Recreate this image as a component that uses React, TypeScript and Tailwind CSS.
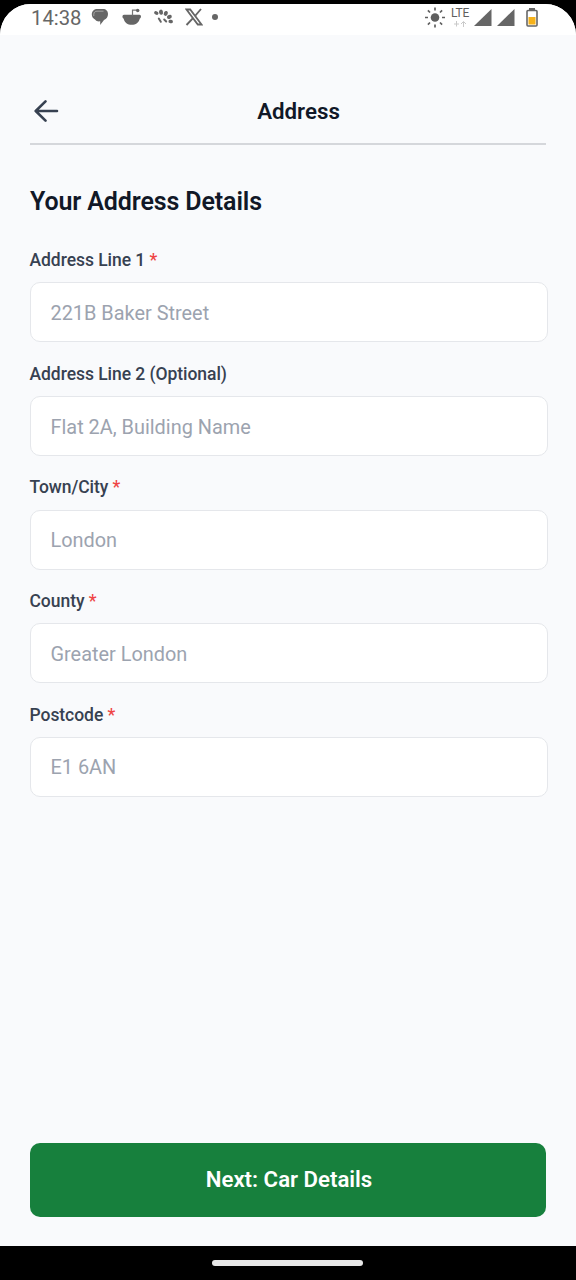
import React from "react";

type Field = { label: string; placeholder: string; required: boolean };

const fields: Field[] = [
  { label: "Address Line 1", placeholder: "221B Baker Street", required: true },
  { label: "Address Line 2 (Optional)", placeholder: "Flat 2A, Building Name", required: false },
  { label: "Town/City", placeholder: "London", required: true },
  { label: "County", placeholder: "Greater London", required: true },
  { label: "Postcode", placeholder: "E1 6AN", required: true },
];

function ChatIcon() {
  return (
    <svg className="h-[18px] w-[18px]" viewBox="0 0 18 18" fill="#666">
      <path d="M6.500 1H12c3 0 5 2 5 5 0 2.700-1.500 5-4 6L9.200 17v-3.700C7 13.700 5 13 4 11.500 2 10.500.8 8.700.8 6.500.8 3 3.200 1 6.500 1Z" />
      <path d="M2.800 8V6.200c0-2 1.500-3 3.200-3h6.500" fill="none" stroke="#b4b4b4" strokeWidth=".8" />
    </svg>
  );
}

function BowlIcon() {
  return (
    <svg className="h-[18px] w-5" viewBox="0 0 20 18" fill="#666">
      <path d="M2 6.800h15.500c1.700.1 2.200 2.800.2 3.900-.6 3.700-4 6.100-8 6.100s-7.400-2.400-8-6.100C-.3 9.600.3 6.900 2 6.800Z" />
      <path d="M10.500 7.500V2.200h4.500" fill="none" stroke="#777" strokeWidth="1.200" />
      <circle cx="15.700" cy="2.500" r="1.700" />
    </svg>
  );
}

function PawIcon() {
  return (
    <svg className="h-[18px] w-5" viewBox="0 0 20 18" fill="#666">
      <ellipse cx="2.300" cy="5" rx="2.200" ry="1.700" transform="rotate(25 2.300 5)" />
      <ellipse cx="7" cy="4.200" rx="2" ry="2.600" transform="rotate(-12 7 4.200)" />
      <ellipse cx="11.800" cy="5.400" rx="2" ry="2.500" transform="rotate(20 11.800 5.400)" />
      <ellipse cx="15.400" cy="8.900" rx="2.500" ry="1.900" transform="rotate(-20 15.400 8.900)" />
      <ellipse cx="16.700" cy="13.500" rx="2.300" ry="1.700" transform="rotate(15 16.700 13.500)" />
      <path d="m4.800 10.500 2 3.300M10.200 11.500l2 2" stroke="#666" strokeWidth="2" strokeLinecap="round" />
    </svg>
  );
}

function XIcon() {
  return (
    <svg className="h-[18px] w-[18px]" viewBox="0 0 18 18" fill="none" stroke="#666">
      <path d="M1.500 1.500h3.700l11.300 15h-3.700Z" strokeWidth="1.800" />
      <path d="M16 1 10 8M8 10.200 1.500 17" strokeWidth="1.900" />
    </svg>
  );
}

function SunIcon() {
  return (
    <svg className="h-[22px] w-[22px]" viewBox="0 0 22 22" fill="#5f5f5f">
      <circle cx="11" cy="10.500" r="4.300" />
      <path
        d="M11 .5v3M11 17.500v3M1 10.500h3M18 10.500h3M3.900 3.400 6 5.500M16 15.500l2.100 2.100M3.900 17.600 6 15.500M16 5.500l2.100-2.100"
        stroke="#5f5f5f"
        strokeWidth="1.700"
      />
    </svg>
  );
}

function SignalIcon() {
  return (
    <svg className="h-[18px] w-[18px]" viewBox="0 0 18 18" fill="#666">
      <path d="M17.500 0v17H0Z" />
    </svg>
  );
}

function StatusBar() {
  return (
    <div className="flex h-[31px] shrink-0 items-start bg-white">
      <span className="ml-[31px] mt-[1px] w-[52px] text-[20.300px] leading-[26px] text-[#666]">14:38</span>
      <div className="ml-2 mt-1 flex items-center">
        <ChatIcon />
        <div className="ml-[13px]"><BowlIcon /></div>
        <div className="ml-3"><PawIcon /></div>
        <div className="ml-[11px]"><XIcon /></div>
        <div className="ml-[9px] size-[6px] rounded-full bg-[#666]" />
      </div>
      <div className="ml-auto mr-[38px] mt-[3px] flex items-start">
        <SunIcon />
        <div className="ml-[5px] flex w-[18px] flex-col items-center">
          <span className="mt-[-1px] text-[12px] leading-[14px] tracking-[-0.300px] text-[#5f5f5f]">LTE</span>
          <svg className="mt-[1px] h-[6px] w-[14px]" viewBox="0 0 14 6" fill="none" stroke="#c9c9c9">
            <path d="M3.500 0v5.500M1 3h5M10.500 6V1M8 3l2.500-2.500L13 3" />
          </svg>
        </div>
        <div className="ml-[5px] mt-[2px] flex gap-[5px]">
          <SignalIcon />
          <SignalIcon />
        </div>
        <svg className="ml-[11px] mt-[1px] h-5 w-3" viewBox="0 0 12 20" fill="none">
          <path d="M3 0h6v3H3Z" fill="#666" />
          <rect x="1" y="2.500" width="10" height="15.500" rx="1" stroke="#666" strokeWidth="1.600" />
          <path d="M2.500 9h7v7.500h-7Z" fill="#f6b21a" />
        </svg>
      </div>
    </div>
  );
}

export default function App() {
  return (
    <div className="flex h-[1280px] w-[576px] flex-col bg-black pt-1 font-['Roboto',sans-serif]">
      <div className="flex flex-1 flex-col overflow-hidden rounded-t-[31px] bg-[#f9fafc]">
        <StatusBar />
        <header className="mx-[30px] mt-[42px] flex h-[68px] shrink-0 items-center border-b-2 border-[#d5d7db] pt-[2px]">
          <button aria-label="Back" className="ml-[4px] h-6 w-[26px]">
            <svg className="h-6 w-[26px]" viewBox="0 0 26 24" fill="none" stroke="#374151" strokeWidth="2.600" strokeLinecap="round" strokeLinejoin="round">
              <path d="M23 12H2M11.500 2.300 1.700 12l9.800 9.700" />
            </svg>
          </button>
          <h1 className="ml-[9px] mr-[18px] flex-1 text-center text-[22.300px] font-semibold leading-7 text-[#111827]">Address</h1>
        </header>
        <main className="flex flex-1 flex-col px-[30px] pt-10">
          <h2 className="text-[25px] font-semibold leading-[33px] tracking-[-0.120px] text-[#111827]">Your Address Details</h2>
          <form className="ml-[-0.500px] mt-[30px] flex flex-col">
            {fields.map((f) => (
              <label key={f.label} className="flex h-[113.650px] flex-col">
                <span className="mb-[9.400px] text-[17.500px] font-medium leading-[25px] tracking-[-0.050px] text-[#374151]">
                  {f.label}
                  {f.required && <span className="text-[#ef4444]"> *</span>}
                </span>
                <input
                  placeholder={f.placeholder}
                  className="h-[60px] w-[518px] rounded-[10px] border-[1.250px] border-[#e5e7eb] bg-white px-5 pt-[2px] text-[19.900px] text-[#111827] placeholder:text-[#9ca3af]"
                />
              </label>
            ))}
          </form>
          <button className="mb-[29px] mt-auto h-[74px] w-full rounded-[10px] bg-[#17803d] pl-[2px] text-[22.200px] font-semibold text-white">
            Next: Car Details
          </button>
        </main>
      </div>
      <footer className="flex h-[34px] shrink-0 items-center justify-center pr-[1px]">
        <div className="h-[6px] w-[151px] rounded-full bg-[#e8e8e8]" />
      </footer>
    </div>
  );
}
